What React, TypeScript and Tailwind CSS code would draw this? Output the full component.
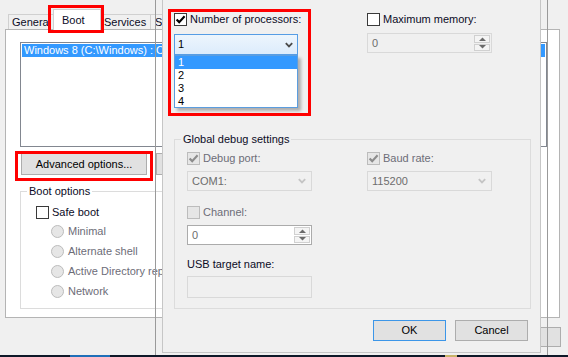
import React from 'react';

const Check = ({ checked = false, disabled = false }: { checked?: boolean; disabled?: boolean }) => (
  <span
    className={
      disabled
        ? 'flex h-[13px] w-[13px] shrink-0 items-center justify-center border border-[#bcbcbc] bg-[#e6e6e6]'
        : 'flex h-[13px] w-[13px] shrink-0 items-center justify-center border border-[#3a3a3a] bg-white'
    }
  >
    {checked && (
      <svg width="11" height="11" viewBox="0 0 11 11">
        <path d="M1.6 5.4L4.2 8.1L9.6 2.2" fill="none" stroke={disabled ? '#8c8c8c' : '#000'} strokeWidth="2.1" />
      </svg>
    )}
  </span>
);

const Radio = () => (
  <span className="h-[13px] w-[13px] shrink-0 rounded-full border border-[#bcbcbc] bg-[#e6e6e6]" />
);

const Chevron = ({ color }: { color: string }) => (
  <svg width="8" height="6" viewBox="0 0 8 6" className="shrink-0">
    <path d="M0.8 1.2L4 4.4L7.2 1.2" fill="none" stroke={color} strokeWidth="1.8" />
  </svg>
);

const Spin = () => (
  <div className="my-px mr-px flex w-[16px] flex-col gap-px">
    <div className="flex h-[8px] items-center justify-center border border-[#d0d0d0] bg-[#f4f4f4]">
      <svg width="7" height="4" viewBox="0 0 7 4">
        <path d="M0 4L3.5 0.5L7 4Z" fill="#6a6a6a" />
      </svg>
    </div>
    <div className="flex h-[8px] items-center justify-center border border-[#d0d0d0] bg-[#f4f4f4]">
      <svg width="7" height="4" viewBox="0 0 7 4">
        <path d="M0 0L3.5 3.5L7 0Z" fill="#6a6a6a" />
      </svg>
    </div>
  </div>
);

const Button = ({ label, width, focused = false }: { label: string; width: string; focused?: boolean }) => (
  <div
    className={`flex items-center justify-center whitespace-nowrap border bg-[#e1e1e1] text-[#000] ${width} ${
      focused ? 'border-[#3c96e8]' : 'border-[#adadad]'
    }`}
  >
    {label}
  </div>
);

export default function App() {
  return (
    <div className="relative h-[357px] w-[568px] overflow-hidden bg-[#f0f0f0] font-['Liberation_Sans',Arial,sans-serif] text-[11px] leading-[13px] text-[#0b0b26]">
      {/* msconfig window behind */}
      <div className="flex h-full flex-col">
        <div className="flex h-[30px] items-end pl-[8px]">
          <div className="flex h-[16px] w-[46px] items-center overflow-hidden whitespace-nowrap border border-b-0 border-[#d0d0d0] bg-[#f0f0f0] pl-[3px]">
            General
          </div>
          <div className="relative z-10 -ml-px flex h-[21px] w-[48px] items-center border border-b-0 border-[#d0d0d0] bg-white pl-[8px]">
            Boot
          </div>
          <div className="-ml-px flex h-[16px] w-[51px] items-center whitespace-nowrap border border-b-0 border-[#d0d0d0] bg-[#f0f0f0] pl-[3px]">
            Services
          </div>
          <div className="-ml-px flex h-[16px] w-[50px] items-center whitespace-nowrap border border-b-0 border-[#d0d0d0] bg-[#f0f0f0] pl-[4px]">
            Startup
          </div>
          <div className="-ml-px flex h-[16px] w-[40px] items-center whitespace-nowrap border border-b-0 border-[#d0d0d0] bg-[#f0f0f0] pl-[4px]">
            Tools
          </div>
        </div>

        <div className="-mt-px ml-[5px] h-[289px] w-[555px] border border-[#b4b4b4] bg-white pl-[14px] pt-[12px]">
          <div className="h-[105px] w-[527px] border border-[#828790] bg-white p-px">
            <div className="h-[13px] whitespace-nowrap bg-[#3399ff] pl-[2px] text-white">
              Windows 8 (C:\Windows) : Current OS; Default OS
            </div>
          </div>

          <div className="mt-[6px] flex h-[22px] gap-[9px] pl-px">
            <Button label="Advanced options..." width="w-[126px]" />
            <Button label="Set as default" width="w-[100px]" />
            <Button label="Delete" width="w-[75px]" />
          </div>

          <fieldset className="mt-[9px] w-[300px] border border-[#dcdcdc] px-0 pb-[10px] pt-0">
            <legend className="ml-[6px] px-[2px] leading-[14px]">Boot options</legend>
            <div className="flex flex-col pl-[15px] pt-[8px]">
              <div className="flex h-[13px] items-center gap-[3px]">
                <Check />
                <span>Safe boot</span>
              </div>
              <div className="mt-[6px] flex flex-col gap-[7px] pl-[15px] text-[#6d6d78]">
                {['Minimal', 'Alternate shell', 'Active Directory repair', 'Network'].map((r) => (
                  <div key={r} className="flex h-[13px] items-center gap-[4px] whitespace-nowrap">
                    <Radio />
                    <span>{r}</span>
                  </div>
                ))}
              </div>
            </div>
          </fieldset>
        </div>

        <div className="flex justify-end gap-[6px] pr-[7px] pt-[9px]">
          <div className="h-[20px] w-[75px] border border-[#adadad] bg-[#e1e1e1]" />
          <div className="h-[20px] w-[75px] border border-[#adadad] bg-[#e1e1e1]" />
          <div className="h-[20px] w-[75px] border border-[#adadad] bg-[#e1e1e1]" />
        </div>

        <div className="mt-auto flex h-[2px] bg-[#0e1828]">
          <div className="ml-[70px] w-[40px] bg-[#1f6fb8]" />
          <div className="ml-[335px] w-[12px] bg-[#c9b46a]" />
        </div>
      </div>

      {/* Boot Advanced Options dialog */}
      <div className="absolute left-[155px] top-0 h-[355px] w-[393px] border-x border-[#9a9a9a]">
        <div className="ml-[6px] flex h-[353px] w-[379px] flex-col border-x border-b border-[#c6c6c6] bg-[#f0f0f0] pl-[11px] pt-[13px]">
          <div className="flex">
            <div className="relative w-[124px]">
              <div className="flex h-[13px] items-center gap-[3px] whitespace-nowrap">
                <Check checked />
                <span>Number of processors:</span>
              </div>
              <div className="mt-[8px] flex h-[21px] items-center border border-[#569de5] bg-gradient-to-b from-[#edf5fd] to-[#dcecfc] pl-[3px] pr-[4px] text-[#000]">
                <span className="flex-1">1</span>
                <Chevron color="#4a4a4a" />
              </div>
              <div className="absolute left-0 top-[42px] z-10 w-[124px] border border-[#5b9ddf] bg-white shadow-[3px_3px_3px_rgba(0,0,0,0.28)]">
                <div className="h-[13px] bg-[#3399ff] pl-[3px] text-white">1</div>
                <div className="h-[13px] pl-[3px] text-[#000]">2</div>
                <div className="h-[13px] pl-[3px] text-[#000]">3</div>
                <div className="h-[12px] pl-[3px] leading-[12px] text-[#000]">4</div>
              </div>
            </div>

            <div className="ml-[69px] w-[125px]">
              <div className="flex h-[13px] items-center gap-[3px] whitespace-nowrap">
                <Check />
                <span>Maximum memory:</span>
              </div>
              <div className="mt-[7px] flex h-[20px] border border-[#d9d9d9] bg-[#f0f0f0]">
                <span className="flex-1 pl-[4px] leading-[18px] text-[#6d6d6d]">0</span>
                <Spin />
              </div>
            </div>
          </div>

          <fieldset className="mt-[77px] w-[357px] border border-[#dcdcdc] px-0 pb-[10px] pt-0">
            <legend className="ml-[6px] px-[2px] leading-[14px]">Global debug settings</legend>
            <div className="flex flex-col pl-[12px] pt-[6px]">
              <div className="flex">
                <div className="w-[125px]">
                  <div className="flex h-[13px] items-center gap-[3px] text-[#6d6d78]">
                    <Check checked disabled />
                    <span>Debug port:</span>
                  </div>
                  <div className="mt-[6px] flex h-[20px] items-center border border-[#d9d9d9] bg-[#f0f0f0] pl-[4px] pr-[5px] text-[#6d6d6d]">
                    <span className="flex-1">COM1:</span>
                    <Chevron color="#c4c4c4" />
                  </div>
                </div>
                <div className="ml-[55px] w-[125px]">
                  <div className="flex h-[13px] items-center gap-[3px] text-[#6d6d78]">
                    <Check checked disabled />
                    <span>Baud rate:</span>
                  </div>
                  <div className="mt-[6px] flex h-[20px] items-center border border-[#d9d9d9] bg-[#f0f0f0] pl-[4px] pr-[5px] text-[#6d6d6d]">
                    <span className="flex-1">115200</span>
                    <Chevron color="#c4c4c4" />
                  </div>
                </div>
              </div>

              <div className="mt-[15px] flex h-[13px] items-center gap-[3px] text-[#6d6d78]">
                <Check disabled />
                <span>Channel:</span>
              </div>
              <div className="mt-[6px] flex h-[20px] w-[125px] border border-[#ababab] bg-white">
                <span className="flex-1 pl-[4px] leading-[18px] text-[#6d6d6d]">0</span>
                <Spin />
              </div>

              <div className="mt-[12px] leading-[14px]">USB target name:</div>
              <div className="mt-[5px] h-[22px] w-[125px] border border-[#d9d9d9] bg-[#f0f0f0]" />
            </div>
          </fieldset>

          <div className="mt-[11px] flex h-[21px] justify-end gap-[9px] pr-[12px]">
            <Button label="OK" width="w-[73px]" focused />
            <Button label="Cancel" width="w-[73px]" />
          </div>
        </div>
      </div>

      {/* red highlight marks */}
      <div className="absolute left-[48px] top-[5px] h-[28px] w-[56px] border-[3px] border-[#ff0000]" />
      <div className="absolute left-[15px] top-[151px] h-[30px] w-[138px] border-[3px] border-[#ff0000]" />
      <div className="absolute left-[168px] top-[9px] h-[107px] w-[143px] border-[3px] border-[#ff0000]" />
    </div>
  );
}
